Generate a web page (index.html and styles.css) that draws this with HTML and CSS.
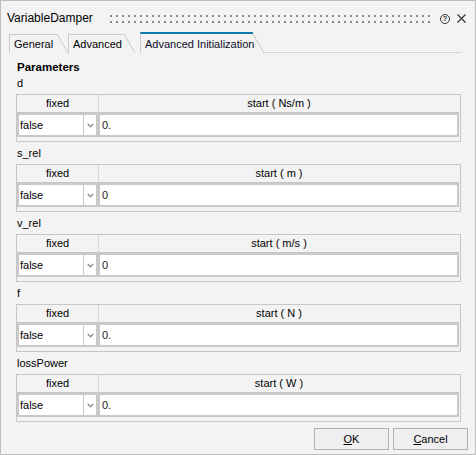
FILE: index.html
```html
<!DOCTYPE html>
<html lang="en">
<head>
  <meta charset="UTF-8" />
  <title>VariableDamper</title>
  <link rel="stylesheet" href="styles.css">
</head>
<body>

  <div class="dialog">
    <div class="titlebar">
      <span class="title">VariableDamper</span>
      <span class="grip"></span>
      <span class="help">?</span>
      <svg class="close" width="9" height="9" viewBox="0 0 9 9">
        <path d="M0.5 0.5 L8.5 8.5 M8.5 0.5 L0.5 8.5" />
      </svg>
    </div>

    <div class="tabbar">
      <div class="tab tab-general">General</div>
      <div class="tab tab-advanced">Advanced</div>
      <div class="tab tab-init active">Advanced Initialization</div>
      <div class="tab-line"></div>
    </div>

    <div class="page">
      <div class="section-title">Parameters</div>

      <div class="param">
        <div class="param-name">d</div>
        <div class="grid">
          <div class="head">fixed</div>
          <div class="head">start ( Ns/m )</div>
          <div class="combo">
            <span class="combo-value">false</span>
            <span class="combo-arrow"><svg width="7" height="5" viewBox="0 0 7 5"><polyline points="0.8,1 3.5,3.7 6.2,1" /></svg></span>
          </div>
          <div class="field">0.</div>
        </div>
      </div>

      <div class="param">
        <div class="param-name">s_rel</div>
        <div class="grid">
          <div class="head">fixed</div>
          <div class="head">start ( m )</div>
          <div class="combo">
            <span class="combo-value">false</span>
            <span class="combo-arrow"><svg width="7" height="5" viewBox="0 0 7 5"><polyline points="0.8,1 3.5,3.7 6.2,1" /></svg></span>
          </div>
          <div class="field">0</div>
        </div>
      </div>

      <div class="param">
        <div class="param-name">v_rel</div>
        <div class="grid">
          <div class="head">fixed</div>
          <div class="head">start ( m/s )</div>
          <div class="combo">
            <span class="combo-value">false</span>
            <span class="combo-arrow"><svg width="7" height="5" viewBox="0 0 7 5"><polyline points="0.8,1 3.5,3.7 6.2,1" /></svg></span>
          </div>
          <div class="field">0</div>
        </div>
      </div>

      <div class="param">
        <div class="param-name">f</div>
        <div class="grid">
          <div class="head">fixed</div>
          <div class="head">start ( N )</div>
          <div class="combo">
            <span class="combo-value">false</span>
            <span class="combo-arrow"><svg width="7" height="5" viewBox="0 0 7 5"><polyline points="0.8,1 3.5,3.7 6.2,1" /></svg></span>
          </div>
          <div class="field">0.</div>
        </div>
      </div>

      <div class="param">
        <div class="param-name">lossPower</div>
        <div class="grid">
          <div class="head">fixed</div>
          <div class="head">start ( W )</div>
          <div class="combo">
            <span class="combo-value">false</span>
            <span class="combo-arrow"><svg width="7" height="5" viewBox="0 0 7 5"><polyline points="0.8,1 3.5,3.7 6.2,1" /></svg></span>
          </div>
          <div class="field">0.</div>
        </div>
      </div>
    </div>

    <div class="buttons">
      <button class="btn"><u>O</u>K</button>
      <button class="btn"><u>C</u>ancel</button>
    </div>
  </div>

</body>
</html>
```

FILE: styles.css
```css
* {
  margin: 0;
  padding: 0;
  box-sizing: border-box;
}

body {
  font-family: 'Liberation Sans', Arial, sans-serif;
  font-size: 11px;
  color: #000;
  background: #f3f3f3;
}

.dialog {
  width: 476px;
  height: 455px;
  border: 1px solid #bcbcbc;
  background: #f3f3f3;
}

/* title bar */

.titlebar {
  display: flex;
  align-items: center;
  height: 30px;
  padding: 5px 0 0 6px;
}

.title {
  font-size: 12px;
  line-height: 15px;
}

.grip {
  flex: 1;
  height: 12px;
  margin: 0 8px 0 15px;
  background-image: radial-gradient(circle, #8a8a8a 0.9px, transparent 1.2px);
  background-size: 6px 6px;
}

.help {
  width: 10px;
  height: 10px;
  border: 1px solid #333;
  border-radius: 50%;
  font-size: 8px;
  font-weight: bold;
  line-height: 8px;
  text-align: center;
  color: #333;
}

.close {
  margin: 0 9px 0 7px;
}

.close path {
  stroke: #333;
  stroke-width: 1.2;
  fill: none;
}

/* tabs */

.tabbar {
  display: flex;
  align-items: flex-end;
  height: 21px;
  margin-top: 1px;
  padding-left: 8px;
}

.tab {
  position: relative;
  height: 19px;
  padding: 2px 0 0 4px;
  border-top: 1px solid #cbcbcb;
  border-left: 1px solid #cbcbcb;
  line-height: 14px;
  white-space: nowrap;
}

.tab::after {
  content: "";
  position: absolute;
  left: 100%;
  top: -1px;
  bottom: 0;
  width: 11px;
  background: linear-gradient(to top right, transparent calc(50% - 0.8px), #c6c6c6 50%, transparent calc(50% + 0.8px));
}

.tab-general {
  width: 48px;
  margin-right: 11px;
}

.tab-advanced {
  width: 56px;
  margin-right: 16px;
}

.tab-init {
  width: 113px;
  margin-right: 11px;
}

.tab.active {
  height: 21px;
  padding-top: 3px;
  border-top: 2px solid #0f7aa8;
  color: #0c0c2a;
}

.tab.active::after {
  top: 0;
}

.tab-line {
  flex: 1;
  margin-right: 14px;
  border-bottom: 1px solid #d3d3d3;
}

/* parameter page */

.page {
  padding: 7px 14px 0 15px;
}

.section-title {
  font-weight: bold;
  font-size: 11.5px;
  line-height: 14px;
  margin-bottom: 2px;
  padding-left: 1px;
}

.param + .param {
  margin-top: 4px;
}

.param-name {
  line-height: 14px;
  margin-bottom: 4px;
  padding-left: 1px;
}

.grid {
  display: grid;
  grid-template-columns: 81px 1fr;
  border: 1px solid #c6c6c6;
  padding: 0 1px 4px 0;
}

.head {
  height: 18px;
  line-height: 17px;
  text-align: center;
  border-bottom: 1px solid #c6c6c6;
}

.head + .head {
  border-left: 1px solid #d6d6d6;
}

.combo {
  display: flex;
  height: 24px;
  border: 2px solid #c9c9c9;
  background: #fff;
}

.combo-value {
  flex: 1;
  padding-left: 1px;
  line-height: 20px;
}

.combo-arrow {
  display: flex;
  align-items: center;
  justify-content: center;
  width: 13px;
  border-left: 1px solid #c9c9c9;
}

.combo-arrow polyline {
  fill: none;
  stroke: #8d8d8d;
  stroke-width: 1.4;
}

.field {
  height: 24px;
  border: 2px solid #c9c9c9;
  background: #fff;
  padding-left: 2px;
  line-height: 20px;
  color: #1a1a1a;
}

/* dialog buttons */

.buttons {
  display: flex;
  justify-content: flex-end;
  gap: 4px;
  margin-top: 6px;
  padding-right: 7px;
}

.btn {
  width: 75px;
  height: 22px;
  border: 1px solid #b2b2b2;
  background: #efefef;
  font-family: 'Liberation Sans', Arial, sans-serif;
  font-size: 11px;
  color: #000;
}
```
